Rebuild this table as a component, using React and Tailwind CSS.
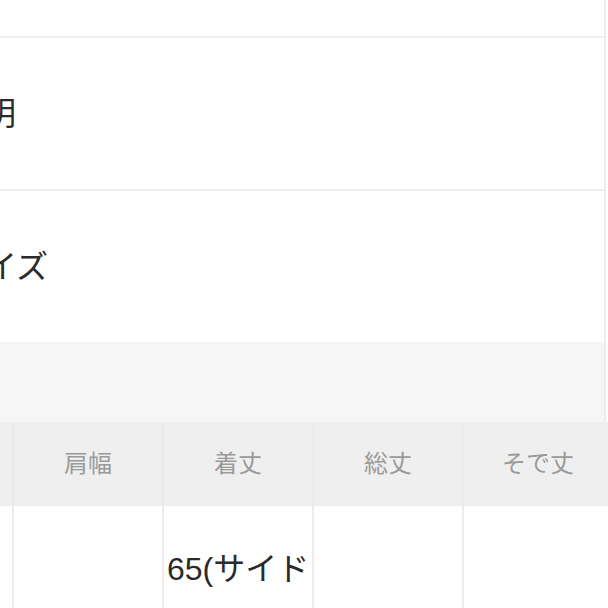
const headers = ['', '肩幅', '着丈', '総丈', 'そで丈']

export default function App() {
  return (
    <div className="w-[608px] h-[608px] overflow-hidden bg-white font-['Liberation_Sans','Noto_Sans_CJK_JP',sans-serif] text-[#2a2a2a]">
      <div className="border-r-2 border-[#ececec] mr-[2px]">
        {/* top rows */}
        <div className="h-[38px] border-b-2 border-[#eeeeee]" />
        <div className="h-[153px] flex items-center border-b-2 border-[#eeeeee]">
          <span className="ml-[-48px] text-[32px] leading-none">説明</span>
        </div>
        <div className="h-[151px] flex items-center">
          <span className="ml-[-47px] text-[32px] leading-none">サイズ</span>
        </div>
        <div className="h-[80px] bg-[#f6f6f6]" />

        {/* size table */}
        <div className="ml-[-138px] grid grid-cols-[150px_150px_150px_150px_150px]">
          {headers.map((h, i) => (
            <div
              key={i}
              className="h-[84px] bg-[#efefef] flex items-center justify-center text-[24px] text-[#9a9a9a] border-l-2 border-[#eaeaea]"
            >
              {h}
            </div>
          ))}
          {['', '', '65(サイドスリット)', '', ''].map((v, i) => (
            <div
              key={i}
              className="h-[140px] bg-white border-l-2 border-[#ececec] pt-[35px] pl-[3px] text-[32px] leading-[1.75]"
            >
              {v}
            </div>
          ))}
        </div>
      </div>
    </div>
  )
}
